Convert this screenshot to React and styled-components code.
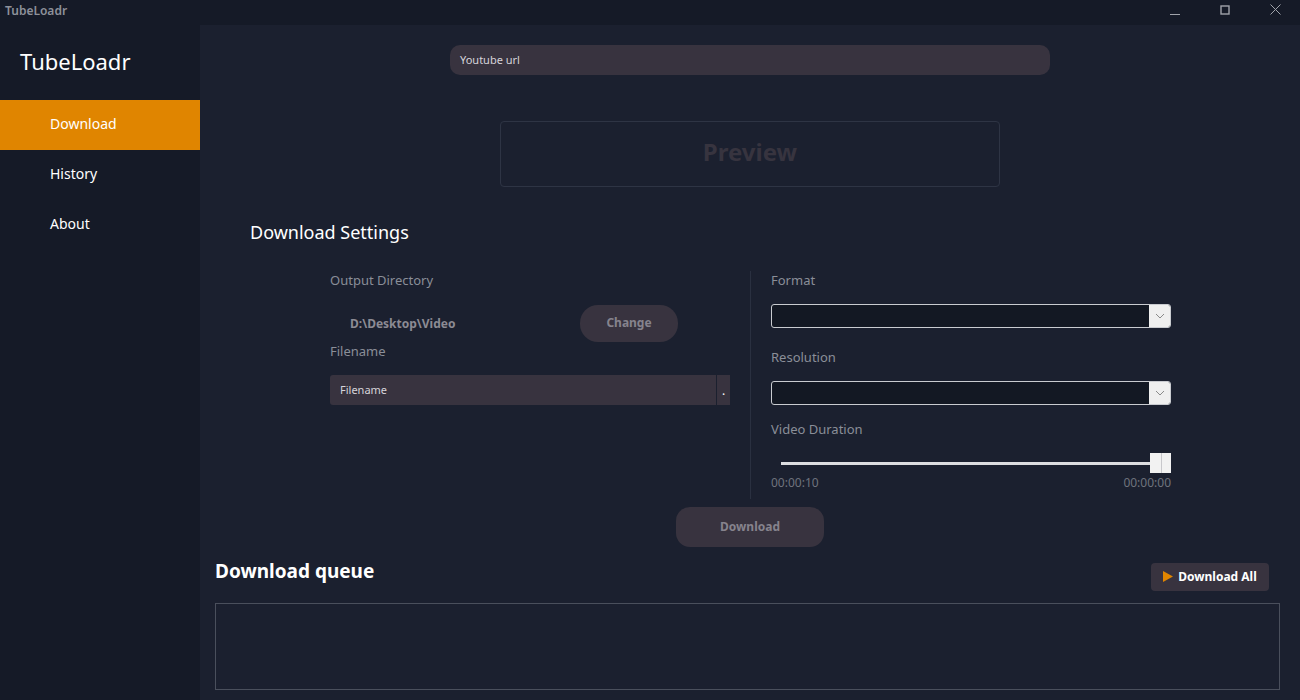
import styled, { createGlobalStyle } from 'styled-components'

const GlobalStyle = createGlobalStyle`
  body {
    margin: 0;
    background: #1b202f;
    font-family: 'Noto Sans', 'Open Sans', sans-serif;
  }
`

const Window = styled.div`
  width: 1300px;
  height: 700px;
  display: flex;
  flex-direction: column;
  overflow: hidden;
`

const TitleBar = styled.div`
  height: 25px;
  background: #151a27;
  display: flex;
  align-items: center;
  justify-content: space-between;
  padding-left: 5px;
`

const WindowTitle = styled.span`
  font-size: 12px;
  font-weight: 600;
  color: #8d919a;
  margin-top: -4px;
`

const WindowControls = styled.div`
  display: flex;
  height: 100%;
`

const ControlButton = styled.div`
  width: 50px;
  height: 100%;
  display: flex;
  align-items: center;
  justify-content: center;
  margin-top: -3px;
`

const Body = styled.div`
  flex: 1;
  display: flex;
  min-height: 0;
`

const Sidebar = styled.nav`
  width: 200px;
  background: #151a27;
  display: flex;
  flex-direction: column;
`

const Brand = styled.div`
  height: 75px;
  box-sizing: border-box;
  display: flex;
  align-items: center;
  padding: 0 0 4px 20px;
  font-size: 22px;
  color: #ffffff;
`

const NavItem = styled.div`
  height: 50px;
  box-sizing: border-box;
  display: flex;
  align-items: center;
  padding: 0 0 3px 50px;
  font-size: 14px;
  color: #ffffff;
  background: ${(props) => (props.active ? '#e08500' : 'transparent')};
`

const Main = styled.main`
  flex: 1;
  background: #1b202f;
  display: flex;
  flex-direction: column;
  padding: 20px 20px 10px 15px;
`

const UrlInput = styled.div`
  width: 600px;
  height: 30px;
  box-sizing: border-box;
  align-self: center;
  margin-left: 5px;
  background: #38333f;
  border-radius: 10px;
  display: flex;
  align-items: center;
  padding: 0 0 2px 10px;
  font-size: 11px;
  color: #d6d4da;
`

const PreviewBox = styled.div`
  width: 500px;
  height: 66px;
  box-sizing: border-box;
  align-self: center;
  margin: 46px 0 0 5px;
  padding-bottom: 5px;
  border: 1px solid #2e3444;
  border-radius: 4px;
  display: flex;
  align-items: center;
  justify-content: center;
  font-size: 24px;
  font-weight: 700;
  color: #37343f;
`

const SectionTitle = styled.h2`
  margin: 33px 0 0 35px;
  font-size: 18px;
  font-weight: 400;
  color: #ffffff;
  line-height: 24px;
`

const Settings = styled.div`
  display: grid;
  grid-template-columns: 400px 1px 400px;
  column-gap: 20px;
  margin: 27px 0 0 115px;
`

const Column = styled.div`
  display: flex;
  flex-direction: column;
`

const Divider = styled.div`
  background: #2a3040;
  height: 228px;
`

const Label = styled.div`
  font-size: 13px;
  color: #8a8e98;
  line-height: 18px;
  margin-top: ${(props) => props.top || 0}px;
`

const DirRow = styled.div`
  display: flex;
  align-items: center;
  margin-top: 16px;
`

const DirPath = styled.div`
  width: 250px;
  box-sizing: border-box;
  padding-left: 20px;
  font-size: 12px;
  font-weight: 700;
  color: #8c8b94;
`

const PillButton = styled.div`
  width: ${(props) => props.width}px;
  height: ${(props) => props.height}px;
  box-sizing: border-box;
  padding-bottom: 2px;
  background: #38333f;
  border-radius: ${(props) => props.radius}px;
  display: flex;
  align-items: center;
  justify-content: center;
  font-size: 12px;
  font-weight: 700;
  color: #86838d;
`

const FileRow = styled.div`
  display: flex;
  height: 30px;
  margin-top: 15px;
  gap: 1px;
`

const FileInput = styled.div`
  flex: 1;
  background: #38333f;
  border-radius: 3px 0 0 3px;
  display: flex;
  align-items: center;
  padding: 0 0 2px 10px;
  font-size: 11px;
  color: #d6d4da;
`

const FileExt = styled.div`
  width: 13px;
  background: #38333f;
  color: #ffffff;
  font-size: 12px;
  display: flex;
  justify-content: center;
  align-items: flex-end;
  padding-bottom: 6px;
  box-sizing: border-box;
`

const Select = styled.div`
  height: 24px;
  box-sizing: border-box;
  margin-top: ${(props) => props.top}px;
  border: 1px solid #c9cbd0;
  border-radius: 3px;
  background: #131823;
  display: flex;
  justify-content: flex-end;
  overflow: hidden;
`

const SelectArrow = styled.div`
  width: 21px;
  background: #efefef;
  display: flex;
  align-items: center;
  justify-content: center;
`

const SliderRow = styled.div`
  position: relative;
  height: 20px;
  margin-top: 15px;
  display: flex;
  align-items: center;
  padding-left: 10px;
`

const Track = styled.div`
  flex: 1;
  height: 3px;
  background: #dcdde0;
`

const Thumb = styled.div`
  position: absolute;
  right: 0;
  top: 0;
  width: 21px;
  height: 20px;
  background: #f2f2f2;
  &::after {
    content: '';
    position: absolute;
    left: 11px;
    top: 0;
    width: 1px;
    height: 20px;
    background: #c8c8cc;
  }
`

const TimeRow = styled.div`
  display: flex;
  justify-content: space-between;
  margin-top: 2px;
  font-size: 12px;
  color: #6f737d;
  line-height: 16px;
`

const DownloadRow = styled.div`
  display: flex;
  justify-content: center;
  margin: 8px 0 0 5px;
`

const QueueHeader = styled.div`
  display: flex;
  align-items: flex-start;
  justify-content: space-between;
  margin-top: 9px;
  padding-right: 11px;
`

const QueueTitle = styled.h3`
  margin: 2px 0 0;
  font-size: 19px;
  line-height: 26px;
  font-weight: 700;
  color: #ffffff;
`

const DownloadAll = styled.div`
  height: 28px;
  width: 118px;
  box-sizing: border-box;
  margin-top: 7px;
  padding-bottom: 2px;
  background: #38333f;
  border-radius: 4px;
  display: flex;
  align-items: center;
  justify-content: center;
  gap: 5px;
  font-size: 12px;
  font-weight: 700;
  color: #ffffff;
`

const QueueBox = styled.div`
  flex: 1;
  margin-top: 12px;
  border: 1px solid #4a4f5c;
`

const Chevron = () => (
  <svg width='10' height='6' viewBox='0 0 10 6'>
    <path d='M1 1l4 4 4-4' fill='none' stroke='#8a8a8a' strokeWidth='1' />
  </svg>
)

const App = () => {
  return (
    <Window>
      <GlobalStyle />
      <TitleBar>
        <WindowTitle>TubeLoadr</WindowTitle>
        <WindowControls>
          <ControlButton>
            <svg width='10' height='10' viewBox='0 0 10 10'>
              <path d='M0 9.5h10' stroke='#a0a3aa' strokeWidth='1' />
            </svg>
          </ControlButton>
          <ControlButton>
            <svg width='10' height='10' viewBox='0 0 10 10'>
              <rect x='1' y='1' width='8' height='8' fill='none' stroke='#a0a3aa' strokeWidth='1.4' />
            </svg>
          </ControlButton>
          <ControlButton>
            <svg width='11' height='11' viewBox='0 0 11 11'>
              <path d='M0.5 0.5l10 10M10.5 0.5l-10 10' stroke='#a0a3aa' strokeWidth='1' />
            </svg>
          </ControlButton>
        </WindowControls>
      </TitleBar>
      <Body>
        <Sidebar>
          <Brand>TubeLoadr</Brand>
          <NavItem active>Download</NavItem>
          <NavItem>History</NavItem>
          <NavItem>About</NavItem>
        </Sidebar>
        <Main>
          <UrlInput>Youtube url</UrlInput>
          <PreviewBox>Preview</PreviewBox>
          <SectionTitle>Download Settings</SectionTitle>
          <Settings>
            <Column>
              <Label>Output Directory</Label>
              <DirRow>
                <DirPath>D:\Desktop\Video</DirPath>
                <PillButton width={98} height={37} radius={18}>
                  Change
                </PillButton>
              </DirRow>
              <Label>Filename</Label>
              <FileRow>
                <FileInput>Filename</FileInput>
                <FileExt>.</FileExt>
              </FileRow>
            </Column>
            <Divider />
            <Column>
              <Label>Format</Label>
              <Select top={15}>
                <SelectArrow>
                  <Chevron />
                </SelectArrow>
              </Select>
              <Label top={20}>Resolution</Label>
              <Select top={15}>
                <SelectArrow>
                  <Chevron />
                </SelectArrow>
              </Select>
              <Label top={15}>Video Duration</Label>
              <SliderRow>
                <Track />
                <Thumb />
              </SliderRow>
              <TimeRow>
                <span>00:00:10</span>
                <span>00:00:00</span>
              </TimeRow>
            </Column>
          </Settings>
          <DownloadRow>
            <PillButton width={148} height={40} radius={14}>
              Download
            </PillButton>
          </DownloadRow>
          <QueueHeader>
            <QueueTitle>Download queue</QueueTitle>
            <DownloadAll>
              <svg width='10' height='11' viewBox='0 0 10 11'>
                <path d='M0 0l10 5.5L0 11z' fill='#e08500' />
              </svg>
              Download All
            </DownloadAll>
          </QueueHeader>
          <QueueBox />
        </Main>
      </Body>
    </Window>
  )
}

export default App
